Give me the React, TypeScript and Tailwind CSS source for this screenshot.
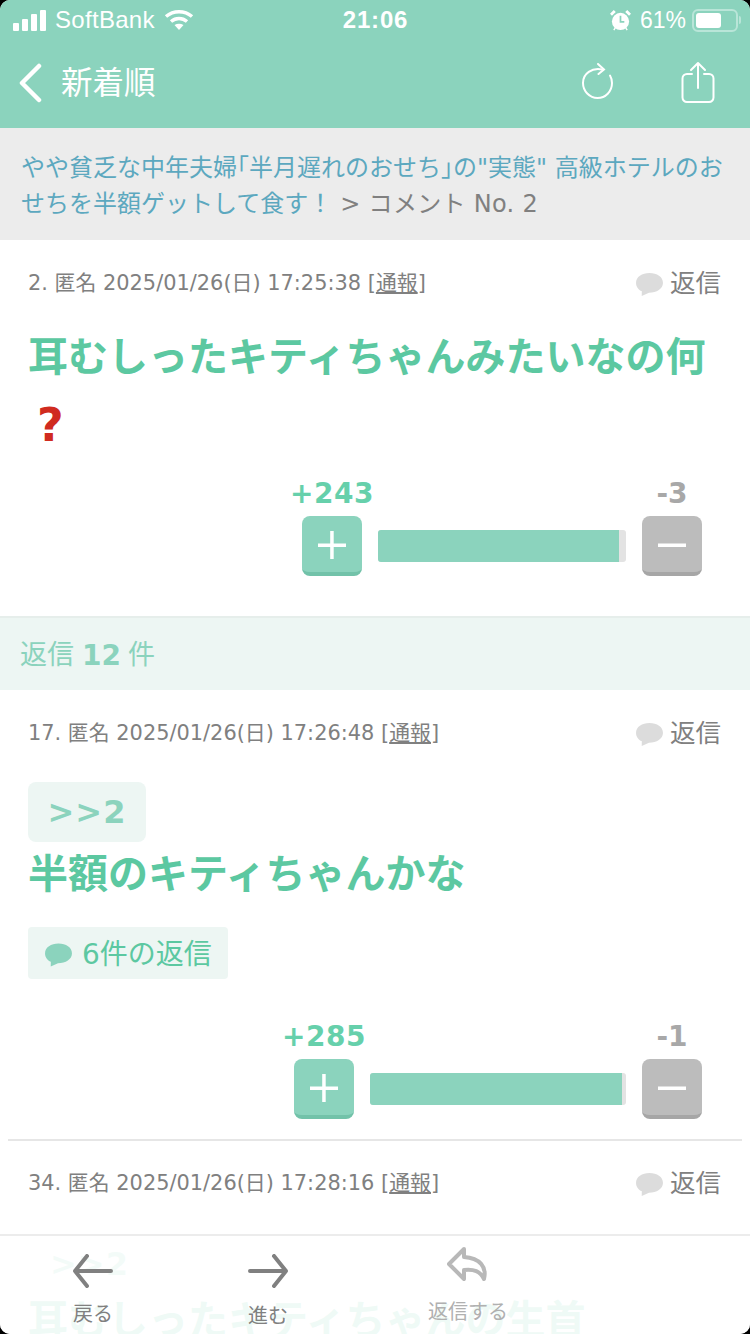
import React from "react";

const sans = "font-['DejaVu_Sans','Noto_Sans_CJK_JP',sans-serif]";

const Bubble = ({ className }: { className: string }) => (
  <svg viewBox="0 0 28 24" className={className} fill="currentColor">
    <path d="M14 1C6.800 1 1 4.700 1 10.500c0 3.600 2.300 6.500 5.600 8.100L6.500 23l7-3.100C21 19.900 27 16 27 10.500 27 4.700 21.200 1 14 1z" />
  </svg>
);

const CommentHead = ({ no, date }: { no: string; date: string }) => (
  <div className="flex items-center justify-between h-[40px] pl-[28px] pr-[29px]">
    <span className="text-[20.900px] text-[#808080] whitespace-nowrap">
      {no}. 匿名 {date} [<span className="underline">通報</span>]
    </span>
    <span className="flex items-center gap-[6px] text-[25.500px] leading-[36px] mb-[2px] text-[#808080]">
      <Bubble className="w-[29px] h-[25px] text-[#dcdcdc] mt-[2px]" />
      返信
    </span>
  </div>
);

const Vote = ({ plus, minus, plusWidth, fill }: { plus: string; minus: string; plusWidth: string; fill: string }) => (
  <div className="flex justify-end pr-[48px]">
    <div className="flex flex-col items-center w-[60px]">
      <div className="h-[40px] text-[28px] leading-[36px] font-bold text-[#66d0ab] tracking-[0.500px] whitespace-nowrap">{plus}</div>
      <div className="w-[60px] h-[60px] rounded-[8px] bg-[#8bd3bd] border-b-[4px] border-[#72c2a9] flex items-center justify-center">
        <svg viewBox="0 0 28 28" className="w-[28px] h-[28px] mt-[1px]" fill="#fff">
          <rect x="0" y="12.500" width="28" height="3.500" />
          <rect x="12.200" y="0" width="3.500" height="28" />
        </svg>
      </div>
    </div>
    <div className={`${plusWidth} h-[32px] mt-[54px] mx-[16px] rounded-[3px] bg-[#e3e3e3] overflow-hidden`}>
      <div className={`${fill} h-full bg-[#8bd3bd]`} />
    </div>
    <div className="flex flex-col items-center w-[60px]">
      <div className="h-[40px] text-[28px] leading-[36px] font-bold text-[#a8a8a8]">{minus}</div>
      <div className="w-[60px] h-[60px] rounded-[8px] bg-[#bcbcbc] border-b-[4px] border-[#a6a6a6] flex items-center justify-center">
        <svg viewBox="0 0 28 28" className="w-[28px] h-[28px] mt-[1px]" fill="#fff">
          <rect x="0" y="12.500" width="28" height="3.500" />
        </svg>
      </div>
    </div>
  </div>
);

export default function App() {
  return (
    <div className={`h-[1334px] bg-black overflow-hidden ${sans}`}>
      <div className="relative h-full rounded-[10px] overflow-hidden bg-white">
        <div className="h-[128px] bg-[#8bd3bd] text-white">
          <div className="h-[40px] flex items-center justify-between pl-[13px] pr-[9px] font-['Liberation_Sans',sans-serif]">
            <div className="flex items-center w-[260px]">
              <div className="flex items-end gap-[3px] h-[21px]">
                <span className="w-[6px] h-[8px] rounded-[1px] bg-white" />
                <span className="w-[6px] h-[12px] rounded-[1px] bg-white" />
                <span className="w-[6px] h-[17px] rounded-[1px] bg-white" />
                <span className="w-[6px] h-[21px] rounded-[1px] bg-white" />
              </div>
              <span className="ml-[9px] text-[24px] tracking-[0.300px]">SoftBank</span>
              <svg viewBox="0 0 30 24" className="ml-[9px] w-[30px] h-[24px]" fill="none" stroke="#fff" strokeWidth="3.500">
                <path d="M2 8.500C9.500 2 20.500 2 28 8.500" />
                <path d="M7 13.500c4.800-4 11.200-4 16 0" />
                <path d="M15 22l-4.500-5c2.700-1.800 6.300-1.800 9 0z" fill="#fff" stroke="none" />
              </svg>
            </div>
            <span className="text-[24px] font-bold tracking-[0.800px] mr-[3px]">21:06</span>
            <div className="flex items-center justify-end w-[260px]">
              <svg viewBox="0 0 22 24" className="w-[21px] h-[23px]">
                <circle cx="11" cy="13" r="9" fill="#fff" />
                <path d="M11 7v6.500h4" stroke="#8bd3bd" strokeWidth="1.800" fill="none" />
                <path d="M1 6l4-4M21 6l-4-4" stroke="#fff" strokeWidth="3" />
                <path d="M4 22l2-3M18 22l-2-3" stroke="#fff" strokeWidth="1.500" />
              </svg>
              <span className="ml-[9px] text-[23px]">61%</span>
              <div className="ml-[6px] w-[46px] h-[23px] rounded-[6px] border-2 border-[#b9e5d8] p-[2px]">
                <div className="w-[25px] h-full rounded-[3px] bg-white" />
              </div>
              <div className="ml-[1px] w-[2px] h-[8px] rounded-r-[2px] bg-[#b9e5d8]" />
            </div>
          </div>
          <div className="h-[88px] flex items-center pl-[18px]">
            <svg viewBox="0 0 24 40" className="w-[24px] h-[40px] mb-[2px]" fill="none" stroke="#fff" strokeWidth="4.500" strokeLinecap="round" strokeLinejoin="round">
              <path d="M21 3L4 20l0 0 17 17" />
            </svg>
            <span className="ml-[19px] text-[31.500px] leading-none">新着順</span>
            <svg viewBox="0 0 34 38" className="ml-auto w-[34px] h-[38px] mb-[4px]" fill="none" stroke="#fff" strokeWidth="2" strokeLinecap="round">
              <path d="M21 6.500C11 4.500 2 10.500 2 20c0 8 6.500 15 14.500 15S31 28.500 31 20c0-3-.8-5.500-2-7.500" />
              <path d="M17 1l6 5.500-5.500 4.500" />
            </svg>
            <svg viewBox="0 0 34 42" className="ml-[66px] mr-[35px] w-[34px] h-[42px] mb-[4px]" fill="none" stroke="#fff" strokeWidth="2" strokeLinecap="round" strokeLinejoin="round">
              <path d="M17 27V2M10 9l7-7 7 7" />
              <path d="M11 13H6a4.500 4.500 0 0 0-4.500 4.500v19A4.500 4.500 0 0 0 6 41h22a4.500 4.500 0 0 0 4.500-4.500v-19A4.500 4.500 0 0 0 28 13h-5" />
            </svg>
          </div>
        </div>

        <div className="h-[112px] bg-[#ececec] pt-[22px] pl-[21px] pr-[20px] text-[24px] leading-[36px] text-[#808080]">
          <span className="text-[#5ca8bf]">やや貧乏な中年夫婦｢半月遅れのおせち｣の"実態" 高級ホテルのおせちを半額ゲットして食す！</span>
          <span className="ml-[8px] tracking-[0.300px]">&gt; コメント No. 2</span>
        </div>

        <div className="h-[378px] pt-[24px] border-b-2 border-[#e6eeeb]">
          <CommentHead no="2" date="2025/01/26(日) 17:25:38" />
          <div className="mt-[19px] pl-[28px] pr-[20px] text-[40px] leading-[68px] font-bold text-[#5cc8a1]">
            耳むしったキティちゃんみたいなの何
            <div className="h-[68px] pl-[9px] text-[46px] font-black text-[#d02b1f]">?</div>
          </div>
          <div className="mt-[17px]">
            <Vote plus="+243" minus="-3" plusWidth="w-[248px]" fill="w-[241px]" />
          </div>
        </div>

        <div className="h-[72px] bg-[#edf6f3] pl-[20px] pt-[3px] flex items-center text-[27px] text-[#8bd3bd]">
          返信<span className="ml-[8px] mr-[7px] font-bold text-[28px]">12</span>件
        </div>

        <div className="pt-[24px]">
          <CommentHead no="17" date="2025/01/26(日) 17:26:48" />
          <div className="mt-[28px] ml-[28px] w-[118px] h-[60px] rounded-[8px] bg-[#edf6f3] flex items-center justify-center text-[32px] font-bold text-[#8bd3bd] tracking-[1px]">
            &gt;&gt;2
          </div>
          <div className="mt-[2px] pl-[28px] text-[40px] leading-[60px] font-bold text-[#5cc8a1]">半額のキティちゃんかな</div>
          <div className="mt-[23px] ml-[28px] w-[200px] h-[52px] rounded-[4px] bg-[#edf6f3] flex items-center pl-[16px] text-[28px] text-[#5cc8a1]">
            <Bubble className="w-[29px] h-[26px] text-[#8bd3bd] mt-[3px] mr-[9px]" />
            <span className="pt-[4px]">6件の返信</span>
          </div>
          <div className="mt-[40px]">
            <Vote plus="+285" minus="-1" plusWidth="w-[256px]" fill="w-[252px]" />
          </div>
          <div className="mt-[20px] mx-[8px] h-[2px] bg-[#e6e6e6]" />
        </div>

        <div className="pt-[23px]">
          <CommentHead no="34" date="2025/01/26(日) 17:28:16" />
          <div className="mt-[36px] ml-[50px] text-[32px] font-bold text-[#8bd3bd] tracking-[1px]">&gt;&gt;2</div>
          <div className="mt-[2px] pl-[28px] text-[40px] leading-[60px] font-bold text-[#5cc8a1] whitespace-nowrap">耳むしったキティちゃんの生首</div>
        </div>

        <div className="absolute left-0 right-0 bottom-0 h-[100px] border-t-2 border-[#ececec] bg-white/90 font-['Noto_Sans_CJK_JP',sans-serif]">
          <div className="absolute left-[72px] top-[18px] w-[42px] flex flex-col items-center">
            <svg viewBox="0 0 42 34" className="w-[42px] h-[34px]" fill="none" stroke="#808080" strokeWidth="4" strokeLinecap="round" strokeLinejoin="round">
              <path d="M39 17H3M15 2L3 17l12 15" />
            </svg>
            <span className="mt-[13px] text-[20px] leading-[24px] text-[#808080] whitespace-nowrap">戻る</span>
          </div>
          <div className="absolute left-[247px] top-[18px] w-[42px] flex flex-col items-center">
            <svg viewBox="0 0 42 34" className="w-[42px] h-[34px]" fill="none" stroke="#808080" strokeWidth="4" strokeLinecap="round" strokeLinejoin="round">
              <path d="M3 17h36M27 2l12 15-12 15" />
            </svg>
            <span className="mt-[15px] text-[20px] leading-[24px] text-[#808080] whitespace-nowrap">進む</span>
          </div>
          <div className="absolute left-[428px] top-[11px] w-[80px] flex flex-col items-center">
            <svg viewBox="0 0 42 38" className="w-[42px] h-[38px]" fill="none" stroke="#b8b8b8" strokeWidth="4" strokeLinejoin="round">
              <path d="M17 2L2 17l15 15V23c10-1 16 1 20 9 3-12-4-21-20-22z" />
            </svg>
            <span className="mt-[14px] text-[20px] leading-[24px] text-[#b0b0b0] whitespace-nowrap">返信する</span>
          </div>
        </div>
      </div>
    </div>
  );
}
